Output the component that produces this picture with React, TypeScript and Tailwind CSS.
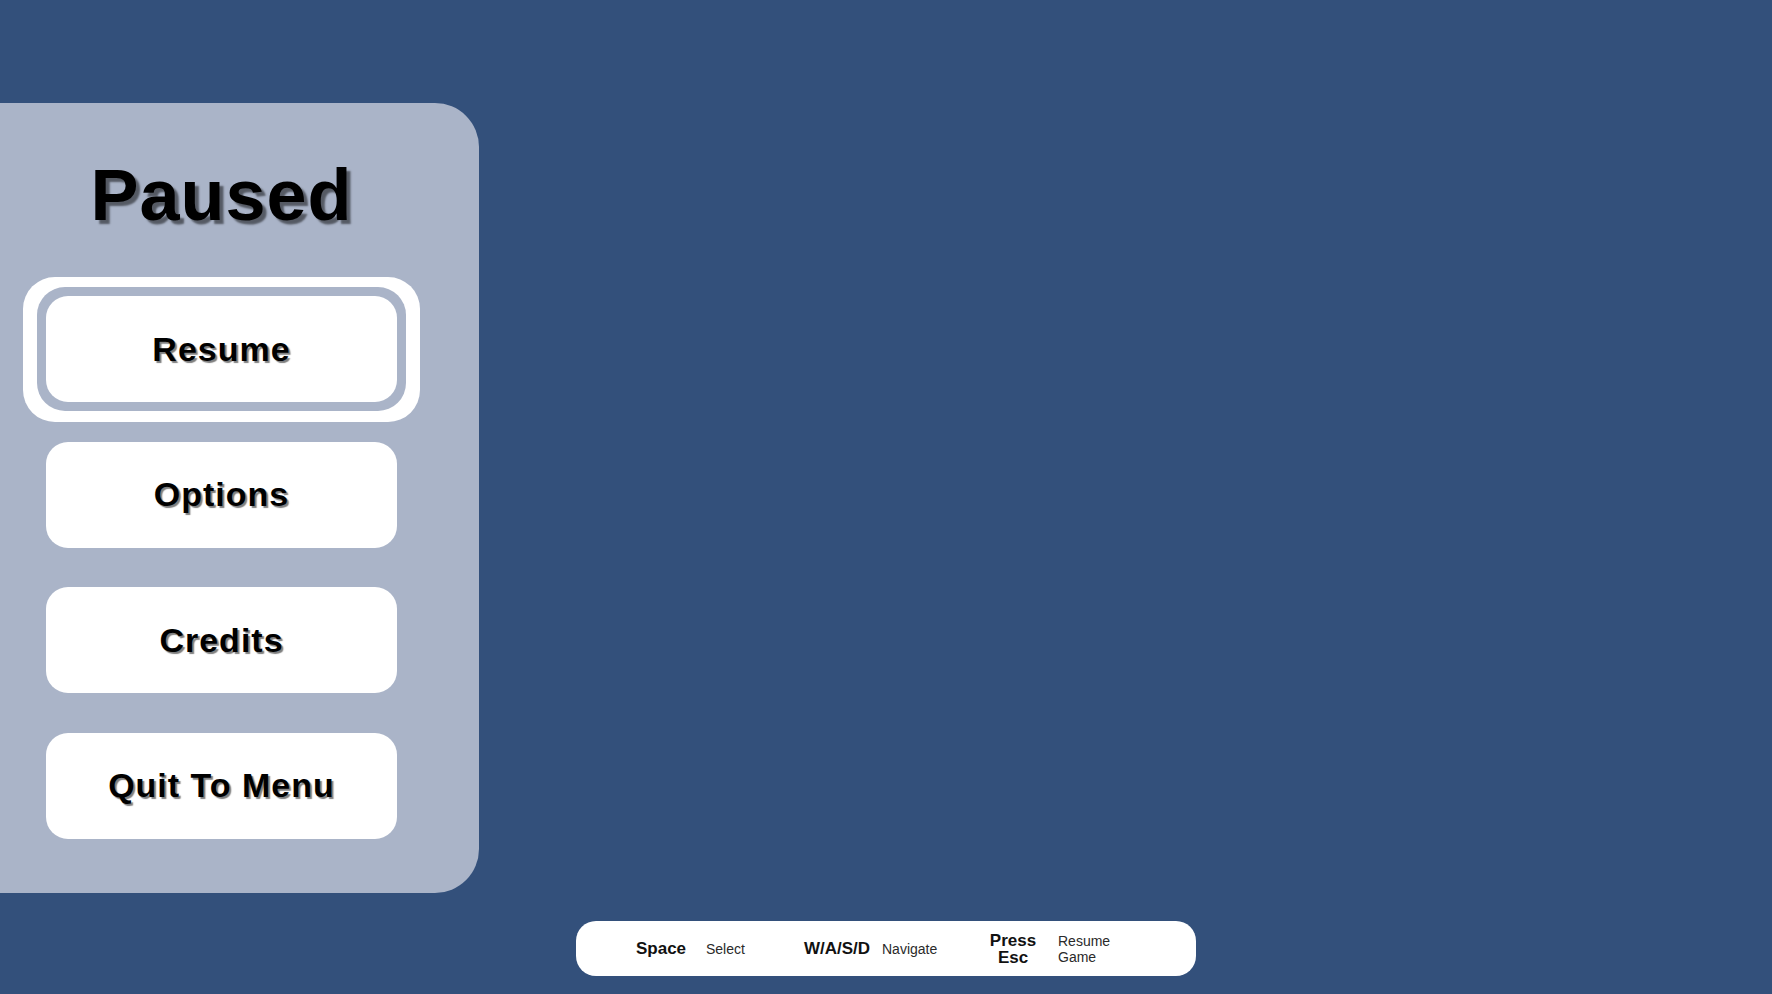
const menu = ["Resume", "Options", "Credits", "Quit To Menu"];

const hints = [
  { key: ["Space"], label: ["Select"] },
  { key: ["W/A/S/D"], label: ["Navigate"] },
  { key: ["Press", "Esc"], label: ["Resume", "Game"] },
];

function MenuButton({ label }: { label: string }) {
  return (
    <button className="flex h-[106px] w-[351px] items-center justify-center rounded-[22px] bg-white text-[34px] font-bold tracking-[1px] text-black [text-shadow:2px_2px_1px_rgba(0,0,0,0.5)]">
      {label}
    </button>
  );
}

export default function App() {
  return (
    <div
      className="flex h-screen w-full flex-col overflow-hidden bg-[#33507b]"
      style={{ fontFamily: '"Liberation Sans", Arial, sans-serif' }}
    >
      {/* Pause panel */}
      <div className="ml-[-36px] mt-[103px] flex h-[790px] w-[515px] flex-col items-center rounded-r-[44px] bg-[#aab4c8] pt-[56px]">
        <h1 className="text-[72px] font-bold leading-none tracking-[1px] text-black [text-shadow:4px_4px_2px_rgba(0,0,0,0.5)]">
          Paused
        </h1>

        <div className="mt-[65px] flex flex-col items-center gap-[39.5px]">
          {menu.map((m, i) =>
            i === 0 ? (
              <div
                key={m}
                className="-mx-[23px] -mb-[20px] -mt-[19px] rounded-[32px] bg-white px-[14px] pb-[11px] pt-[10px]"
              >
                <div className="rounded-[28px] bg-[#aab4c8] p-[9px]">
                  <MenuButton label={m} />
                </div>
              </div>
            ) : (
              <MenuButton key={m} label={m} />
            )
          )}
        </div>
      </div>

      {/* Control hints */}
      <div className="mb-[18px] mt-auto flex h-[55px] w-[620px] items-center self-center rounded-[20px] bg-white pl-[40px]">
        {hints.map((h) => (
          <div key={h.label.join(" ")} className="flex w-[176px] items-center">
            <div className="w-[90px] text-center text-[17px] font-bold leading-[17px] text-[#111]">
              {h.key.map((k) => (
                <div key={k}>{k}</div>
              ))}
            </div>
            <div className="text-[14px] leading-[16px] text-[#2a2a2a]">
              {h.label.map((l) => (
                <div key={l}>{l}</div>
              ))}
            </div>
          </div>
        ))}
      </div>
    </div>
  );
}
